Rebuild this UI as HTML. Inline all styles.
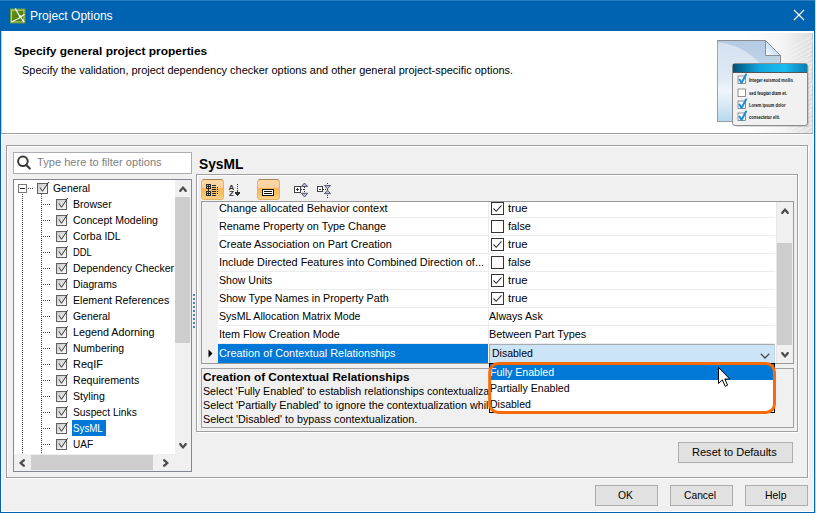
<!DOCTYPE html>
<html><head><meta charset="utf-8"><title>Project Options</title>
<style>
*{box-sizing:border-box;margin:0;padding:0}
html,body{width:816px;height:513px;overflow:hidden;background:#f0f0f0}
body{font-family:"Liberation Sans","DejaVu Sans",sans-serif;font-size:11.5px;color:#000;position:relative}
.a,.t{position:absolute}
.t{white-space:nowrap;line-height:16px;height:16px;transform-origin:0 0}
.b{font-weight:bold}
.btn{position:absolute;height:21px;border:1px solid #adadad;background:#e1e1e1;text-align:center;line-height:19px;letter-spacing:-0.42px}
.etch{position:absolute;border:1px solid #a0a0a0;box-shadow:1px 1px 0 #fff, inset 1px 1px 0 #fff}
.ck{position:absolute;width:13px;height:13px;border:1px solid #333;background:#fff}
.tb{position:absolute;width:23px;height:21px;border:1px solid #e6b265;border-top-color:#a88350;border-radius:3.5px;background:linear-gradient(#fdd9a8,#fdd09a 42%,#f9b656 44%,#fbc066 75%,#fdd48c)}
.rowline{position:absolute;left:218px;width:557px;height:1px;background:#ececec}
</style></head><body>

<div class="a" style="left:0;top:0;width:816px;height:31px;background:#0063b1"></div>
<div class="a" style="left:0;top:0;width:816px;height:1px;background:#2a7cc0"></div>
<svg class="a" style="left:9px;top:7px" width="18" height="18" viewBox="9 7 18 18">
<defs><linearGradient id="ig" x1="0" y1="0" x2="1" y2="1"><stop offset="0" stop-color="#6a9a1c"/><stop offset="1" stop-color="#3f6d08"/></linearGradient></defs>
<rect x="10.5" y="9" width="14.5" height="14" fill="url(#ig)" stroke="#7fa63a" stroke-width="0.8"/>
<rect x="11.6" y="10.1" width="12.3" height="11.8" fill="none" stroke="#d5e3ae" stroke-width="0.8"/>
<path d="M15.3 8.6 Q18.5 15.5 24.2 22" stroke="#fff" stroke-width="1.2" fill="none"/>
<path d="M11.3 22 Q18.5 19.5 24.5 14.3" stroke="#f2f7e2" stroke-width="1.2" fill="none"/>
<circle cx="20.2" cy="16.3" r="1.1" fill="#fff"/>
</svg>
<div class="t" style="left:30.22px;top:8px;transform:scaleX(0.9673);font-size:12.5px;color:#fff;">Project Options</div>
<svg class="a" style="left:793px;top:9px" width="12" height="12" viewBox="0 0 12 12"><path d="M1 1 L11 11 M11 1 L1 11" stroke="#fff" stroke-width="1.2" fill="none"/></svg>
<div class="a" style="left:1px;top:31px;width:813px;height:102px;background:#fff"></div>
<div class="a" style="left:1px;top:31px;width:1px;height:102px;background:#cfcac6"></div>
<div class="a" style="left:1px;top:133px;width:813px;height:1px;background:#a0a0a0"></div>
<div class="a" style="left:1px;top:134px;width:813px;height:1px;background:#fff"></div>
<div class="a" style="left:0;top:31px;width:1px;height:482px;background:#0063b1"></div>
<div class="a" style="left:1px;top:134px;width:1px;height:378px;background:#fff"></div>
<div class="a" style="left:813px;top:31px;width:1px;height:481px;background:#fff"></div>
<div class="a" style="left:814px;top:31px;width:1px;height:482px;background:#0063b1"></div>
<div class="a" style="left:815px;top:0;width:1px;height:513px;background:#dcd6d0"></div>
<div class="a" style="left:1px;top:511px;width:813px;height:1px;background:#fff"></div>
<div class="a" style="left:0;top:512px;width:815px;height:1px;background:#0063b1"></div>
<div class="t b" style="left:14.17px;top:43px;transform:scaleX(1.0390);">Specify general project properties</div>
<div class="t" style="left:22.23px;top:62px;transform:scaleX(0.9519);">Specify the validation, project dependency checker options and other general project-specific options.</div>
<svg class="a" style="left:700px;top:31px" width="113" height="102" viewBox="700 31 113 102">
<defs>
<linearGradient id="bgg" x1="0" x2="1" y1="0" y2="0"><stop offset="0" stop-color="#fff"/><stop offset="0.55" stop-color="#f4f4f4"/><stop offset="1" stop-color="#dcdcdc"/></linearGradient>
<linearGradient id="doc" x1="0" x2="0" y1="0" y2="1"><stop offset="0" stop-color="#b3cae3"/><stop offset="0.45" stop-color="#c9dbec"/><stop offset="0.62" stop-color="#e6eff7"/><stop offset="1" stop-color="#9dcaea"/></linearGradient>
<linearGradient id="doc2" x1="0" x2="0" y1="0" y2="1"><stop offset="0" stop-color="#ffffff" stop-opacity="0.45"/><stop offset="0.5" stop-color="#ffffff" stop-opacity="0.35"/><stop offset="1" stop-color="#ffffff" stop-opacity="0"/></linearGradient>
<linearGradient id="fold" x1="0" x2="1" y1="1" y2="0"><stop offset="0" stop-color="#ffffff"/><stop offset="0.6" stop-color="#bcd8f4"/><stop offset="1" stop-color="#a8c8ea"/></linearGradient>
<clipPath id="dclip"><path d="M717.5 40.5 H765.5 L780.5 55.5 V121.5 H717.5 Z"/></clipPath>
<linearGradient id="bar" x1="0" x2="1" y1="0" y2="0"><stop offset="0" stop-color="#035079"/><stop offset="0.35" stop-color="#0fa6dc"/><stop offset="0.7" stop-color="#18bbf0"/><stop offset="1" stop-color="#0a7db4"/></linearGradient>
</defs>
<rect x="745" y="31" width="68" height="102" fill="url(#bgg)"/>
<defs><linearGradient id="fade" x1="0" x2="1" y1="0" y2="0"><stop offset="0" stop-color="#fff" stop-opacity="0"/><stop offset="1" stop-color="#fff" stop-opacity="0.55"/></linearGradient></defs>
<g stroke="url(#fade)" stroke-width="1.1" fill="none"><path d="M813 36.0 L770 59.0"/><path d="M813 40.3 L770 63.3"/><path d="M813 44.6 L770 67.6"/><path d="M813 48.9 L770 71.9"/><path d="M813 53.2 L770 76.2"/><path d="M813 57.5 L770 80.5"/><path d="M813 61.8 L770 84.8"/><path d="M813 66.1 L770 89.1"/><path d="M813 70.4 L770 93.4"/><path d="M813 74.7 L770 97.7"/><path d="M813 79.0 L770 102.0"/><path d="M813 83.3 L770 106.3"/><path d="M813 87.6 L770 110.6"/><path d="M813 91.9 L770 114.9"/><path d="M813 96.2 L770 119.2"/><path d="M813 100.5 L770 123.5"/><path d="M813 104.8 L770 127.8"/><path d="M813 109.1 L770 132.1"/><path d="M813 113.4 L770 136.4"/><path d="M813 117.7 L770 140.7"/><path d="M813 122.0 L770 145.0"/><path d="M813 126.3 L770 149.3"/><path d="M813 130.6 L770 153.6"/><path d="M813 134.9 L770 157.9"/></g>
<rect x="700" y="31" width="113" height="2" fill="#fff"/><rect x="812" y="33" width="1" height="100" fill="#c4c4c4"/>
<g stroke="#fff" stroke-width="0.6" fill="none" opacity="0.5">
<path d="M770 133 Q800 90 813 40"/><path d="M780 133 Q805 95 813 60"/><path d="M790 133 Q808 105 813 80"/><path d="M800 133 Q810 115 813 100"/>
<path d="M775 60 Q795 70 813 72"/><path d="M775 80 Q795 90 813 92"/><path d="M780 110 Q800 112 813 112"/><path d="M785 125 Q800 126 813 125"/>
</g>
<path d="M717.5 40.5 H765.5 L780.5 55.5 V121.5 H717.5 Z" fill="url(#doc)" stroke="#8c8c8c"/>
<circle cx="713" cy="103" r="61" fill="url(#doc2)" clip-path="url(#dclip)"/>
<path d="M765.5 40.5 V55.5 H780.5 Z" fill="url(#fold)" stroke="#8a8f96" stroke-linejoin="round"/>
<rect x="734" y="65" width="75" height="62" rx="3" fill="#000" opacity="0.12"/>
<rect x="732.5" y="63.5" width="75" height="62" rx="2.5" fill="#f1f1f1" stroke="#8c8c8c"/>
<rect x="733" y="64" width="74" height="8" fill="url(#bar)"/>
<rect x="733" y="72" width="74" height="1" fill="#555"/>
<g fill="#fff" stroke="#777" stroke-width="0.8">
<rect x="738" y="76" width="7.5" height="7.5"/><rect x="738" y="89" width="7.5" height="7.5"/><rect x="738" y="101" width="7.5" height="7.5"/><rect x="738" y="113" width="7.5" height="7.5"/></g>
<g stroke="#1a8fe0" stroke-width="2" fill="none" stroke-linecap="round" stroke-linejoin="round">
<path d="M739.5 79.5 L741.5 83 L746 74.5"/><path d="M739.5 104.5 L741.5 108 L746 99.5"/><path d="M739.5 116.5 L741.5 120 L746 111.5"/></g>
<g font-family="Liberation Sans, sans-serif" font-size="5.6" font-weight="bold" fill="#111">
<text x="749" y="82" textLength="44" lengthAdjust="spacingAndGlyphs">Integer euismod mollis</text><text x="749" y="95" textLength="38" lengthAdjust="spacingAndGlyphs">sed feugiat diam et.</text><text x="749" y="107" textLength="36.5" lengthAdjust="spacingAndGlyphs">Lorem ipsum dolor</text><text x="749" y="119" textLength="31" lengthAdjust="spacingAndGlyphs">consectetur elit.</text></g>
</svg>
<div class="etch" style="left:6px;top:145px;width:802px;height:333px"></div>
<div class="a" style="left:13px;top:152px;width:179px;height:22px;border:1px solid #abadb3;background:#fff"></div>
<svg class="a" style="left:16px;top:155px" width="16" height="16" viewBox="0 0 16 16"><circle cx="6.9" cy="6.3" r="4.8" stroke="#3a3a3a" stroke-width="2" fill="none"/><path d="M10.3 9.9 L13.8 13.5" stroke="#3a3a3a" stroke-width="2.2" stroke-linecap="round"/></svg>
<div class="t" style="left:36.62px;top:154px;transform:scaleX(0.9649);color:#808080;">Type here to filter options</div>
<div class="a" style="left:13px;top:179px;width:179px;height:293px;border:1px solid #828790;background:#fff"></div>
<div class="a" style="left:22px;top:194px;width:1px;height:261px;background-image:repeating-linear-gradient(to bottom,#444 0 1px,transparent 1px 2px)"></div>
<div class="a" style="left:41px;top:194px;width:1px;height:261px;background-image:repeating-linear-gradient(to bottom,#444 0 1px,transparent 1px 2px)"></div>
<div class="a" style="left:28px;top:188px;width:6px;height:1px;background-image:repeating-linear-gradient(to right,#444 0 1px,transparent 1px 2px)"></div>
<svg class="a" style="left:18px;top:184px" width="9" height="9" viewBox="0 0 9 9"><rect x="0.5" y="0.5" width="8" height="8" fill="#fff" stroke="#777"/><path d="M2 4.5 H7" stroke="#222"/></svg>
<svg class="a" style="left:37px;top:181px" width="14" height="14" viewBox="0 0 14 14"><defs><linearGradient id="cg" x1="0" y1="0" x2="1" y2="1"><stop offset="0" stop-color="#c2c2c2"/><stop offset="0.55" stop-color="#e6e6e6"/><stop offset="1" stop-color="#fff"/></linearGradient></defs><rect x="0.5" y="2.5" width="10" height="10" fill="url(#cg)" stroke="#606060"/><path d="M3 6.5 L5.5 10.3 L11.7 1" stroke="#2a2a2a" stroke-width="0.95" fill="none"/></svg>
<div class="t" style="left:53.47px;top:180px;transform:scaleX(0.9045);">General</div>
<div class="a" style="left:43px;top:204px;width:8px;height:1px;background-image:repeating-linear-gradient(to right,#444 0 1px,transparent 1px 2px)"></div>
<svg class="a" style="left:56px;top:197px" width="14" height="14" viewBox="0 0 14 14"><defs><linearGradient id="cg" x1="0" y1="0" x2="1" y2="1"><stop offset="0" stop-color="#c2c2c2"/><stop offset="0.55" stop-color="#e6e6e6"/><stop offset="1" stop-color="#fff"/></linearGradient></defs><rect x="0.5" y="2.5" width="10" height="10" fill="url(#cg)" stroke="#606060"/><path d="M3 6.5 L5.5 10.3 L11.7 1" stroke="#2a2a2a" stroke-width="0.95" fill="none"/></svg>
<div class="t" style="left:72.66px;top:196px;transform:scaleX(0.9170);">Browser</div>
<div class="a" style="left:43px;top:220px;width:8px;height:1px;background-image:repeating-linear-gradient(to right,#444 0 1px,transparent 1px 2px)"></div>
<svg class="a" style="left:56px;top:213px" width="14" height="14" viewBox="0 0 14 14"><defs><linearGradient id="cg" x1="0" y1="0" x2="1" y2="1"><stop offset="0" stop-color="#c2c2c2"/><stop offset="0.55" stop-color="#e6e6e6"/><stop offset="1" stop-color="#fff"/></linearGradient></defs><rect x="0.5" y="2.5" width="10" height="10" fill="url(#cg)" stroke="#606060"/><path d="M3 6.5 L5.5 10.3 L11.7 1" stroke="#2a2a2a" stroke-width="0.95" fill="none"/></svg>
<div class="t" style="left:72.66px;top:212px;transform:scaleX(0.9164);">Concept Modeling</div>
<div class="a" style="left:43px;top:236px;width:8px;height:1px;background-image:repeating-linear-gradient(to right,#444 0 1px,transparent 1px 2px)"></div>
<svg class="a" style="left:56px;top:229px" width="14" height="14" viewBox="0 0 14 14"><defs><linearGradient id="cg" x1="0" y1="0" x2="1" y2="1"><stop offset="0" stop-color="#c2c2c2"/><stop offset="0.55" stop-color="#e6e6e6"/><stop offset="1" stop-color="#fff"/></linearGradient></defs><rect x="0.5" y="2.5" width="10" height="10" fill="url(#cg)" stroke="#606060"/><path d="M3 6.5 L5.5 10.3 L11.7 1" stroke="#2a2a2a" stroke-width="0.95" fill="none"/></svg>
<div class="t" style="left:72.66px;top:228px;transform:scaleX(0.9093);">Corba IDL</div>
<div class="a" style="left:43px;top:252px;width:8px;height:1px;background-image:repeating-linear-gradient(to right,#444 0 1px,transparent 1px 2px)"></div>
<svg class="a" style="left:56px;top:245px" width="14" height="14" viewBox="0 0 14 14"><defs><linearGradient id="cg" x1="0" y1="0" x2="1" y2="1"><stop offset="0" stop-color="#c2c2c2"/><stop offset="0.55" stop-color="#e6e6e6"/><stop offset="1" stop-color="#fff"/></linearGradient></defs><rect x="0.5" y="2.5" width="10" height="10" fill="url(#cg)" stroke="#606060"/><path d="M3 6.5 L5.5 10.3 L11.7 1" stroke="#2a2a2a" stroke-width="0.95" fill="none"/></svg>
<div class="t" style="left:72.73px;top:244px;transform:scaleX(0.8168);">DDL</div>
<div class="a" style="left:43px;top:268px;width:8px;height:1px;background-image:repeating-linear-gradient(to right,#444 0 1px,transparent 1px 2px)"></div>
<svg class="a" style="left:56px;top:261px" width="14" height="14" viewBox="0 0 14 14"><defs><linearGradient id="cg" x1="0" y1="0" x2="1" y2="1"><stop offset="0" stop-color="#c2c2c2"/><stop offset="0.55" stop-color="#e6e6e6"/><stop offset="1" stop-color="#fff"/></linearGradient></defs><rect x="0.5" y="2.5" width="10" height="10" fill="url(#cg)" stroke="#606060"/><path d="M3 6.5 L5.5 10.3 L11.7 1" stroke="#2a2a2a" stroke-width="0.95" fill="none"/></svg>
<div class="t" style="left:72.66px;top:260px;transform:scaleX(0.9142);">Dependency Checker</div>
<div class="a" style="left:43px;top:284px;width:8px;height:1px;background-image:repeating-linear-gradient(to right,#444 0 1px,transparent 1px 2px)"></div>
<svg class="a" style="left:56px;top:277px" width="14" height="14" viewBox="0 0 14 14"><defs><linearGradient id="cg" x1="0" y1="0" x2="1" y2="1"><stop offset="0" stop-color="#c2c2c2"/><stop offset="0.55" stop-color="#e6e6e6"/><stop offset="1" stop-color="#fff"/></linearGradient></defs><rect x="0.5" y="2.5" width="10" height="10" fill="url(#cg)" stroke="#606060"/><path d="M3 6.5 L5.5 10.3 L11.7 1" stroke="#2a2a2a" stroke-width="0.95" fill="none"/></svg>
<div class="t" style="left:72.68px;top:276px;transform:scaleX(0.8920);">Diagrams</div>
<div class="a" style="left:43px;top:300px;width:8px;height:1px;background-image:repeating-linear-gradient(to right,#444 0 1px,transparent 1px 2px)"></div>
<svg class="a" style="left:56px;top:293px" width="14" height="14" viewBox="0 0 14 14"><defs><linearGradient id="cg" x1="0" y1="0" x2="1" y2="1"><stop offset="0" stop-color="#c2c2c2"/><stop offset="0.55" stop-color="#e6e6e6"/><stop offset="1" stop-color="#fff"/></linearGradient></defs><rect x="0.5" y="2.5" width="10" height="10" fill="url(#cg)" stroke="#606060"/><path d="M3 6.5 L5.5 10.3 L11.7 1" stroke="#2a2a2a" stroke-width="0.95" fill="none"/></svg>
<div class="t" style="left:72.65px;top:292px;transform:scaleX(0.9243);">Element References</div>
<div class="a" style="left:43px;top:316px;width:8px;height:1px;background-image:repeating-linear-gradient(to right,#444 0 1px,transparent 1px 2px)"></div>
<svg class="a" style="left:56px;top:309px" width="14" height="14" viewBox="0 0 14 14"><defs><linearGradient id="cg" x1="0" y1="0" x2="1" y2="1"><stop offset="0" stop-color="#c2c2c2"/><stop offset="0.55" stop-color="#e6e6e6"/><stop offset="1" stop-color="#fff"/></linearGradient></defs><rect x="0.5" y="2.5" width="10" height="10" fill="url(#cg)" stroke="#606060"/><path d="M3 6.5 L5.5 10.3 L11.7 1" stroke="#2a2a2a" stroke-width="0.95" fill="none"/></svg>
<div class="t" style="left:72.67px;top:308px;transform:scaleX(0.9045);">General</div>
<div class="a" style="left:43px;top:332px;width:8px;height:1px;background-image:repeating-linear-gradient(to right,#444 0 1px,transparent 1px 2px)"></div>
<svg class="a" style="left:56px;top:325px" width="14" height="14" viewBox="0 0 14 14"><defs><linearGradient id="cg" x1="0" y1="0" x2="1" y2="1"><stop offset="0" stop-color="#c2c2c2"/><stop offset="0.55" stop-color="#e6e6e6"/><stop offset="1" stop-color="#fff"/></linearGradient></defs><rect x="0.5" y="2.5" width="10" height="10" fill="url(#cg)" stroke="#606060"/><path d="M3 6.5 L5.5 10.3 L11.7 1" stroke="#2a2a2a" stroke-width="0.95" fill="none"/></svg>
<div class="t" style="left:72.65px;top:324px;transform:scaleX(0.9356);">Legend Adorning</div>
<div class="a" style="left:43px;top:348px;width:8px;height:1px;background-image:repeating-linear-gradient(to right,#444 0 1px,transparent 1px 2px)"></div>
<svg class="a" style="left:56px;top:341px" width="14" height="14" viewBox="0 0 14 14"><defs><linearGradient id="cg" x1="0" y1="0" x2="1" y2="1"><stop offset="0" stop-color="#c2c2c2"/><stop offset="0.55" stop-color="#e6e6e6"/><stop offset="1" stop-color="#fff"/></linearGradient></defs><rect x="0.5" y="2.5" width="10" height="10" fill="url(#cg)" stroke="#606060"/><path d="M3 6.5 L5.5 10.3 L11.7 1" stroke="#2a2a2a" stroke-width="0.95" fill="none"/></svg>
<div class="t" style="left:72.66px;top:340px;transform:scaleX(0.9090);">Numbering</div>
<div class="a" style="left:43px;top:364px;width:8px;height:1px;background-image:repeating-linear-gradient(to right,#444 0 1px,transparent 1px 2px)"></div>
<svg class="a" style="left:56px;top:357px" width="14" height="14" viewBox="0 0 14 14"><defs><linearGradient id="cg" x1="0" y1="0" x2="1" y2="1"><stop offset="0" stop-color="#c2c2c2"/><stop offset="0.55" stop-color="#e6e6e6"/><stop offset="1" stop-color="#fff"/></linearGradient></defs><rect x="0.5" y="2.5" width="10" height="10" fill="url(#cg)" stroke="#606060"/><path d="M3 6.5 L5.5 10.3 L11.7 1" stroke="#2a2a2a" stroke-width="0.95" fill="none"/></svg>
<div class="t" style="left:72.63px;top:356px;transform:scaleX(0.9549);">ReqIF</div>
<div class="a" style="left:43px;top:380px;width:8px;height:1px;background-image:repeating-linear-gradient(to right,#444 0 1px,transparent 1px 2px)"></div>
<svg class="a" style="left:56px;top:373px" width="14" height="14" viewBox="0 0 14 14"><defs><linearGradient id="cg" x1="0" y1="0" x2="1" y2="1"><stop offset="0" stop-color="#c2c2c2"/><stop offset="0.55" stop-color="#e6e6e6"/><stop offset="1" stop-color="#fff"/></linearGradient></defs><rect x="0.5" y="2.5" width="10" height="10" fill="url(#cg)" stroke="#606060"/><path d="M3 6.5 L5.5 10.3 L11.7 1" stroke="#2a2a2a" stroke-width="0.95" fill="none"/></svg>
<div class="t" style="left:72.65px;top:372px;transform:scaleX(0.9252);">Requirements</div>
<div class="a" style="left:43px;top:396px;width:8px;height:1px;background-image:repeating-linear-gradient(to right,#444 0 1px,transparent 1px 2px)"></div>
<svg class="a" style="left:56px;top:389px" width="14" height="14" viewBox="0 0 14 14"><defs><linearGradient id="cg" x1="0" y1="0" x2="1" y2="1"><stop offset="0" stop-color="#c2c2c2"/><stop offset="0.55" stop-color="#e6e6e6"/><stop offset="1" stop-color="#fff"/></linearGradient></defs><rect x="0.5" y="2.5" width="10" height="10" fill="url(#cg)" stroke="#606060"/><path d="M3 6.5 L5.5 10.3 L11.7 1" stroke="#2a2a2a" stroke-width="0.95" fill="none"/></svg>
<div class="t" style="left:72.65px;top:388px;transform:scaleX(0.9214);">Styling</div>
<div class="a" style="left:43px;top:412px;width:8px;height:1px;background-image:repeating-linear-gradient(to right,#444 0 1px,transparent 1px 2px)"></div>
<svg class="a" style="left:56px;top:405px" width="14" height="14" viewBox="0 0 14 14"><defs><linearGradient id="cg" x1="0" y1="0" x2="1" y2="1"><stop offset="0" stop-color="#c2c2c2"/><stop offset="0.55" stop-color="#e6e6e6"/><stop offset="1" stop-color="#fff"/></linearGradient></defs><rect x="0.5" y="2.5" width="10" height="10" fill="url(#cg)" stroke="#606060"/><path d="M3 6.5 L5.5 10.3 L11.7 1" stroke="#2a2a2a" stroke-width="0.95" fill="none"/></svg>
<div class="t" style="left:72.68px;top:404px;transform:scaleX(0.8915);">Suspect Links</div>
<div class="a" style="left:43px;top:428px;width:8px;height:1px;background-image:repeating-linear-gradient(to right,#444 0 1px,transparent 1px 2px)"></div>
<svg class="a" style="left:56px;top:421px" width="14" height="14" viewBox="0 0 14 14"><defs><linearGradient id="cg" x1="0" y1="0" x2="1" y2="1"><stop offset="0" stop-color="#c2c2c2"/><stop offset="0.55" stop-color="#e6e6e6"/><stop offset="1" stop-color="#fff"/></linearGradient></defs><rect x="0.5" y="2.5" width="10" height="10" fill="url(#cg)" stroke="#606060"/><path d="M3 6.5 L5.5 10.3 L11.7 1" stroke="#2a2a2a" stroke-width="0.95" fill="none"/></svg>
<div class="a" style="left:72px;top:420px;width:34px;height:16px;background:#0078d7"></div>
<div class="t" style="left:72.71px;top:420px;transform:scaleX(0.8478);color:#fff;">SysML</div>
<div class="a" style="left:43px;top:444px;width:8px;height:1px;background-image:repeating-linear-gradient(to right,#444 0 1px,transparent 1px 2px)"></div>
<svg class="a" style="left:56px;top:437px" width="14" height="14" viewBox="0 0 14 14"><defs><linearGradient id="cg" x1="0" y1="0" x2="1" y2="1"><stop offset="0" stop-color="#c2c2c2"/><stop offset="0.55" stop-color="#e6e6e6"/><stop offset="1" stop-color="#fff"/></linearGradient></defs><rect x="0.5" y="2.5" width="10" height="10" fill="url(#cg)" stroke="#606060"/><path d="M3 6.5 L5.5 10.3 L11.7 1" stroke="#2a2a2a" stroke-width="0.95" fill="none"/></svg>
<div class="t" style="left:72.69px;top:436px;transform:scaleX(0.8701);">UAF</div>
<div class="a" style="left:175px;top:180px;width:16px;height:275px;background:#f0f0f0"></div>
<div class="a" style="left:175px;top:197px;width:15px;height:146px;background:#cdcdcd"></div>
<svg class="a" style="left:172.6px;top:178.9px" width="20" height="20" viewBox="0 0 20 20"><polygon points="10.00,7.00 13.70,11.10 13.70,12.90 12.10,12.90 10.00,10.30 7.90,12.90 6.30,12.90 6.30,11.10" fill="#4d4d4d"/></svg>
<svg class="a" style="left:172.6px;top:435.9px" width="20" height="20" viewBox="0 0 20 20"><polygon points="10.00,13.00 13.70,8.90 13.70,7.10 12.10,7.10 10.00,9.70 7.90,7.10 6.30,7.10 6.30,8.90" fill="#4d4d4d"/></svg>
<div class="a" style="left:14px;top:454px;width:177px;height:17px;background:#f0f0f0"></div>
<div class="a" style="left:31px;top:455px;width:122px;height:15px;background:#cdcdcd"></div>
<svg class="a" style="left:11.8px;top:452.5px" width="20" height="20" viewBox="0 0 20 20"><polygon points="7.00,10.00 11.10,13.70 12.90,13.70 12.90,12.10 10.30,10.00 12.90,7.90 12.90,6.30 11.10,6.30" fill="#4d4d4d"/></svg>
<svg class="a" style="left:156.2px;top:452.5px" width="20" height="20" viewBox="0 0 20 20"><polygon points="13.00,10.00 8.90,13.70 7.10,13.70 7.10,12.10 9.70,10.00 7.10,7.90 7.10,6.30 8.90,6.30" fill="#4d4d4d"/></svg>
<div class="a" style="left:193px;top:294px;width:2px;height:34px;background-image:repeating-linear-gradient(to bottom,#4a7fd0 0 2px,transparent 2px 4px)"></div>
<div class="t b" style="left:199.03px;top:156.4px;transform:scaleX(0.9626);font-size:14.3px;line-height:16px;">SysML</div>
<div class="etch" style="left:196px;top:174px;width:602px;height:258px"></div>
<div class="tb" style="left:201px;top:179px"></div>
<div class="tb" style="left:257px;top:179px"></div>
<svg class="a" style="left:196px;top:176px" width="150" height="28" viewBox="196 176 150 28" shape-rendering="crispEdges">
<g fill="#2b2b2b">
<rect x="206" y="184" width="5" height="5"/><rect x="206" y="191" width="5" height="5"/><rect x="208" y="189" width="1" height="2"/>
<rect x="212" y="185" width="4" height="1"/><rect x="212" y="187" width="4" height="1"/><rect x="217" y="187" width="1" height="1"/>
<rect x="212" y="189" width="4" height="1"/><rect x="217" y="189" width="1" height="1"/><rect x="212" y="191" width="4" height="1"/><rect x="217" y="191" width="1" height="1"/>
<rect x="212" y="193" width="4" height="1"/><rect x="217" y="193" width="1" height="1"/><rect x="212" y="195" width="4" height="1"/>
</g>
<g fill="#f6c070"><rect x="207" y="185" width="1" height="1"/><rect x="209" y="185" width="1" height="1"/><rect x="207" y="187" width="1" height="1"/><rect x="209" y="187" width="1" height="1"/>
<rect x="207" y="192" width="1" height="1"/><rect x="209" y="192" width="1" height="1"/><rect x="207" y="194" width="1" height="1"/><rect x="209" y="194" width="1" height="1"/></g>
<g font-family="Liberation Sans, sans-serif" font-size="8" font-weight="bold" fill="#333" shape-rendering="auto"><text x="228.6" y="189.9">A</text><text x="229" y="195.8">Z</text></g>
<g fill="#333"><rect x="237" y="184" width="1" height="1"/><rect x="237" y="186" width="1" height="1"/><rect x="237" y="188" width="1" height="1"/><rect x="237" y="190" width="1" height="3"/>
<rect x="235" y="192" width="5" height="1"/><rect x="235" y="193" width="5" height="1"/><rect x="236" y="194" width="3" height="1"/><rect x="237" y="195" width="1" height="1"/></g>
<rect x="262" y="189" width="12" height="7" fill="#111"/><rect x="263" y="190" width="10" height="5" fill="#fff"/><rect x="264" y="191" width="8" height="1" fill="#111"/><rect x="264" y="193" width="8" height="1" fill="#111"/>
<g fill="none" stroke="#444" stroke-width="1">
<rect x="294.5" y="186.5" width="6" height="6" fill="#fff"/><rect x="317.5" y="186.5" width="5" height="5" fill="#fff"/></g>
<g fill="#333"><rect x="296" y="189" width="3" height="1"/><rect x="297" y="188" width="1" height="3"/><rect x="319" y="189" width="2" height="1"/>
<rect x="301" y="189" width="1" height="1"/><rect x="303" y="189" width="1" height="1"/><rect x="304" y="187" width="1" height="1"/><rect x="304" y="189" width="1" height="1"/><rect x="304" y="191" width="1" height="1"/>
<rect x="323" y="189" width="1" height="1"/><rect x="325" y="189" width="1" height="1"/><rect x="327" y="183" width="1" height="1"/><rect x="327" y="189" width="1" height="1"/><rect x="327" y="195" width="1" height="1"/><rect x="327" y="197" width="1" height="1"/></g>
<g fill="#b4bce0" stroke="#4a4a5a" stroke-width="0.9" shape-rendering="auto" stroke-linejoin="round">
<path d="M304.5 183 L307.6 186.5 H301.4 Z"/><path d="M304.5 197 L307.6 193.3 H301.4 Z"/>
<path d="M327.5 188.8 L330.6 185.5 H324.4 Z"/><path d="M327.5 190.2 L330.6 193.7 H324.4 Z"/></g>
</svg>
<div class="a" style="left:201px;top:201px;width:593px;height:163px;border:1px solid #9a9a9a;background:#fff"></div>
<div class="a" style="left:202px;top:202px;width:16px;height:161px;background:#f0f0f0"></div>
<div class="a" style="left:488px;top:202px;width:1px;height:142px;background:#ececec"></div>
<div class="rowline" style="top:217px"></div>
<div class="t" style="left:218.84px;top:200px;transform:scaleX(0.9453);">Change allocated Behavior context</div>
<div class="ck" style="left:491px;top:202px"></div>
<svg class="a" style="left:491px;top:202px" width="13" height="13" viewBox="0 0 13 13"><path d="M2.5 6.5 L5.2 9.3 L10.5 3.3" stroke="#333" stroke-width="1.1" fill="none"/></svg>
<div class="t" style="left:508.11px;top:200px;transform:scaleX(0.9849);">true</div>
<div class="rowline" style="top:235px"></div>
<div class="t" style="left:218.84px;top:218px;transform:scaleX(0.9409);">Rename Property on Type Change</div>
<div class="ck" style="left:491px;top:220px"></div>
<div class="t" style="left:508.14px;top:218px;transform:scaleX(0.9415);">false</div>
<div class="rowline" style="top:253px"></div>
<div class="t" style="left:218.84px;top:236px;transform:scaleX(0.9448);">Create Association on Part Creation</div>
<div class="ck" style="left:491px;top:238px"></div>
<svg class="a" style="left:491px;top:238px" width="13" height="13" viewBox="0 0 13 13"><path d="M2.5 6.5 L5.2 9.3 L10.5 3.3" stroke="#333" stroke-width="1.1" fill="none"/></svg>
<div class="t" style="left:508.11px;top:236px;transform:scaleX(0.9849);">true</div>
<div class="rowline" style="top:271px"></div>
<div class="t" style="left:218.84px;top:254px;transform:scaleX(0.9464);">Include Directed Features into Combined Direction of...</div>
<div class="ck" style="left:491px;top:256px"></div>
<div class="t" style="left:508.14px;top:254px;transform:scaleX(0.9415);">false</div>
<div class="rowline" style="top:289px"></div>
<div class="t" style="left:218.86px;top:272px;transform:scaleX(0.9180);">Show Units</div>
<div class="ck" style="left:491px;top:274px"></div>
<svg class="a" style="left:491px;top:274px" width="13" height="13" viewBox="0 0 13 13"><path d="M2.5 6.5 L5.2 9.3 L10.5 3.3" stroke="#333" stroke-width="1.1" fill="none"/></svg>
<div class="t" style="left:508.11px;top:272px;transform:scaleX(0.9849);">true</div>
<div class="rowline" style="top:307px"></div>
<div class="t" style="left:218.85px;top:290px;transform:scaleX(0.9325);">Show Type Names in Property Path</div>
<div class="ck" style="left:491px;top:292px"></div>
<svg class="a" style="left:491px;top:292px" width="13" height="13" viewBox="0 0 13 13"><path d="M2.5 6.5 L5.2 9.3 L10.5 3.3" stroke="#333" stroke-width="1.1" fill="none"/></svg>
<div class="t" style="left:508.11px;top:290px;transform:scaleX(0.9849);">true</div>
<div class="rowline" style="top:325px"></div>
<div class="t" style="left:218.86px;top:308px;transform:scaleX(0.9208);">SysML Allocation Matrix Mode</div>
<div class="t" style="left:489.35px;top:308px;transform:scaleX(0.9239);">Always Ask</div>
<div class="rowline" style="top:343px"></div>
<div class="t" style="left:218.84px;top:326px;transform:scaleX(0.9395);">Item Flow Creation Mode</div>
<div class="t" style="left:489.34px;top:326px;transform:scaleX(0.9471);">Between Part Types</div>
<div class="a" style="left:218px;top:344px;width:270px;height:19px;background:#0078d7"></div>
<div class="t" style="left:218.84px;top:345px;transform:scaleX(0.9457);color:#fff;">Creation of Contextual Relationships</div>
<svg class="a" style="left:208px;top:349px" width="5" height="9" viewBox="0 0 5 9"><path d="M0.5 0.5 L4.5 4.5 L0.5 8.5 Z" fill="#000"/></svg>
<div class="a" style="left:489px;top:344px;width:286px;height:19px;background:#cce4f7;border:1px solid #a6abb0;border-bottom-color:#cce4f7;border-right-color:#c0d8ea"></div>
<div class="t" style="left:492.46px;top:344.5px;transform:scaleX(0.9116);">Disabled</div>
<svg class="a" style="left:760px;top:353px" width="10" height="6" viewBox="0 0 10 6"><path d="M0.8 0.8 L5 5 L9.2 0.8" stroke="#4a4a4a" stroke-width="1.25" fill="none"/></svg>
<div class="a" style="left:776px;top:202px;width:1px;height:161px;background:#e6e6e6"></div>
<div class="a" style="left:777px;top:202px;width:16px;height:161px;background:#f0f0f0"></div>
<div class="a" style="left:777px;top:243px;width:15px;height:102px;background:#cdcdcd"></div>
<svg class="a" style="left:774.5px;top:201.4px" width="20" height="20" viewBox="0 0 20 20"><polygon points="10.00,7.00 13.70,11.10 13.70,12.90 12.10,12.90 10.00,10.30 7.90,12.90 6.30,12.90 6.30,11.10" fill="#4d4d4d"/></svg>
<svg class="a" style="left:774.9px;top:344.8px" width="20" height="20" viewBox="0 0 20 20"><polygon points="10.00,13.00 13.70,8.90 13.70,7.10 12.10,7.10 10.00,9.70 7.90,7.10 6.30,7.10 6.30,8.90" fill="#4d4d4d"/></svg>
<div class="a" style="left:201px;top:368px;width:593px;height:60px;border:1px solid #a0a0a0"></div>
<div class="t b" style="left:202.58px;top:368.5px;transform:scaleX(1.0227);">Creation of Contextual Relationships</div>
<div class="t" style="left:202.65px;top:383.3px;transform:scaleX(0.9274);">Select 'Fully Enabled' to establish relationships contextualization.</div>
<div class="t" style="left:202.64px;top:397.2px;transform:scaleX(0.9365);">Select 'Partially Enabled' to ignore the contextualization while creating relationships.</div>
<div class="t" style="left:202.64px;top:411.3px;transform:scaleX(0.9366);">Select 'Disabled' to bypass contextualization.</div>
<div class="a" style="left:489px;top:363px;width:286px;height:50px;background:#fff;border:1px solid #000"></div>
<div class="a" style="left:490px;top:364px;width:284px;height:16px;background:#0078d7"></div>
<div class="t" style="left:489.86px;top:363.5px;transform:scaleX(0.9203);color:#fff;">Fully Enabled</div>
<div class="t" style="left:489.85px;top:379.5px;transform:scaleX(0.9223);">Partially Enabled</div>
<div class="t" style="left:489.76px;top:395.5px;transform:scaleX(0.9140);">Disabled</div>
<svg class="a" style="left:480px;top:356px" width="304" height="64" viewBox="480 356 304 64"><rect x="489.7" y="363.5" width="284.8" height="48.9" rx="8.5" ry="8.5" fill="none" stroke="#f76b0a" stroke-width="3"/></svg>
<svg class="a" style="left:717px;top:366px" width="14" height="22" viewBox="0 0 14 22"><path d="M1.5 1.5 V17.5 L5.3 13.9 L8.2 20.3 L10.6 19.2 L7.8 13 H12.8 Z" fill="#fff" stroke="#000" stroke-width="1"/></svg>
<div class="btn" style="left:678px;top:442px;width:115px"></div>
<div class="btn" style="left:595px;top:485px;width:63px"></div>
<div class="btn" style="left:670px;top:485px;width:63px"></div>
<div class="btn" style="left:745px;top:485px;width:63px"></div>
<div class="t" style="left:691.63px;top:443.5px;transform:scaleX(0.9599);">Reset to Defaults</div>
<div class="t" style="left:617.97px;top:486.5px;transform:scaleX(0.8983);">OK</div>
<div class="t" style="left:683.97px;top:486.5px;transform:scaleX(0.8935);">Cancel</div>
<div class="t" style="left:764.66px;top:486.5px;transform:scaleX(0.9086);">Help</div>
</body></html>
